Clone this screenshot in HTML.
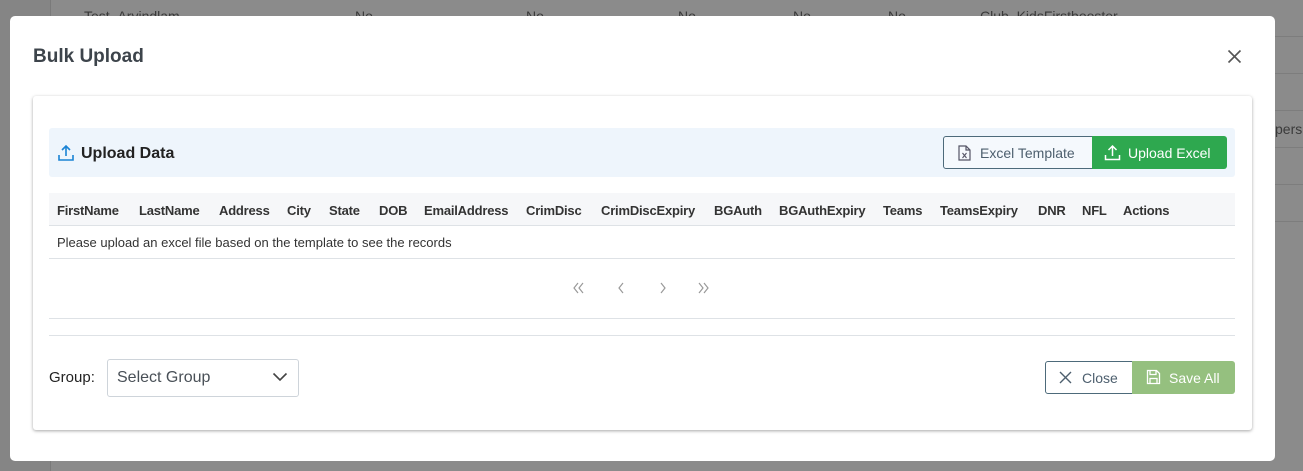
<!DOCTYPE html>
<html><head><meta charset="utf-8"><style>
*{box-sizing:border-box;margin:0;padding:0}
body{width:1303px;height:471px;overflow:hidden;background:#8b8b8b;font-family:"Liberation Sans",sans-serif;position:relative}
.a{position:absolute}
.bgt{color:#3a3a3a;font-size:14px}
.h{font-size:13px;font-weight:bold;color:#333;top:203px;letter-spacing:-0.2px}
svg{position:absolute}
</style></head><body>
<div class="a" style="left:0;top:0;width:50px;height:471px;background:#858585"></div>
<div class="a" style="left:50px;top:0;width:1px;height:471px;background:#7a7a7a"></div>
<div class="a bgt" style="left:84px;top:8px">Test_Arvindlam</div>
<div class="a bgt" style="left:355px;top:8px">No</div>
<div class="a bgt" style="left:526px;top:8px">No</div>
<div class="a bgt" style="left:678px;top:8px">No</div>
<div class="a bgt" style="left:793px;top:8px">No</div>
<div class="a bgt" style="left:888px;top:8px">No</div>
<div class="a bgt" style="left:980px;top:8px">Club_KidsFirstbooster</div>
<div class="a bgt" style="left:1275px;top:121px">pers</div>
<div class="a" style="left:1275px;top:36px;width:28px;height:1px;background:#7d7d7d"></div>
<div class="a" style="left:1275px;top:73px;width:28px;height:1px;background:#7d7d7d"></div>
<div class="a" style="left:1275px;top:110px;width:28px;height:1px;background:#7d7d7d"></div>
<div class="a" style="left:1275px;top:147px;width:28px;height:1px;background:#7d7d7d"></div>
<div class="a" style="left:1275px;top:184px;width:28px;height:1px;background:#7d7d7d"></div>
<div class="a" style="left:1275px;top:221px;width:28px;height:1px;background:#7d7d7d"></div>

<div class="a" style="left:10px;top:16px;width:1265px;height:445px;background:#fff;border-radius:5px"></div>
<div class="a" style="left:33px;top:46px;font-size:19px;font-weight:bold;color:#3d444b">Bulk Upload</div>
<svg style="left:1227px;top:49px" width="15" height="15" viewBox="0 0 15 15"><path d="M1.5 1.5L13.5 13.5M13.5 1.5L1.5 13.5" stroke="#555" stroke-width="1.6"/></svg>

<div class="a" style="left:33px;top:96px;width:1219px;height:334px;background:#fff;box-shadow:0 1px 3px rgba(0,0,0,.35);border-radius:3px"></div>
<div class="a" style="left:49px;top:128px;width:1186px;height:49px;background:#eef5fc;border-radius:3px"></div>
<svg style="left:57px;top:144px" width="18" height="18" viewBox="0 0 18 18"><path d="M9 12V2M5 6l4-4 4 4M2 11v5h14v-5" fill="none" stroke="#1a83d4" stroke-width="1.6"/></svg>
<div class="a" style="left:81px;top:145px;font-size:16px;font-weight:bold;color:#222">Upload Data</div>
<div class="a" style="left:943px;top:136px;width:150px;height:33px;border:1px solid #4d6a7a;border-radius:3px 0 0 3px;background:#f5f9fd"></div>
<svg style="left:958px;top:145px" width="13" height="16" viewBox="0 0 13 16"><path d="M1 1h7l4 4v10H1z M8 1v4h4" fill="none" stroke="#556" stroke-width="1.2"/><path d="M4.5 8l4 5M8.5 8l-4 5" stroke="#556" stroke-width="1.1"/></svg>
<div class="a" style="left:980px;top:145px;font-size:14px;color:#4d5f6e">Excel Template</div>
<div class="a" style="left:1092px;top:136px;width:135px;height:33px;background:#2ea84f;border-radius:0 3px 3px 0"></div>
<svg style="left:1104px;top:144px" width="17" height="17" viewBox="0 0 17 17"><path d="M8.5 12V2M4.5 6l4-4 4 4M1.5 11v4.5h14V11" fill="none" stroke="#fff" stroke-width="1.5"/></svg>
<div class="a" style="left:1128px;top:145px;font-size:14px;color:#fff">Upload Excel</div>

<div class="a" style="left:49px;top:193px;width:1186px;height:33px;background:#f6f7f9;border-bottom:1px solid #dee2e6"></div>
<div class="a h" style="left:57px">FirstName</div>
<div class="a h" style="left:139px">LastName</div>
<div class="a h" style="left:219px">Address</div>
<div class="a h" style="left:287px">City</div>
<div class="a h" style="left:329px">State</div>
<div class="a h" style="left:379px">DOB</div>
<div class="a h" style="left:424px">EmailAddress</div>
<div class="a h" style="left:526px">CrimDisc</div>
<div class="a h" style="left:601px">CrimDiscExpiry</div>
<div class="a h" style="left:714px">BGAuth</div>
<div class="a h" style="left:779px">BGAuthExpiry</div>
<div class="a h" style="left:883px">Teams</div>
<div class="a h" style="left:940px">TeamsExpiry</div>
<div class="a h" style="left:1038px">DNR</div>
<div class="a h" style="left:1082px">NFL</div>
<div class="a h" style="left:1123px">Actions</div>
<div class="a" style="left:57px;top:235px;font-size:13px;color:#333">Please upload an excel file based on the template to see the records</div>
<div class="a" style="left:49px;top:258px;width:1186px;height:1px;background:#dee2e6"></div>
<svg style="left:570px;top:281px" width="150" height="14" viewBox="0 0 150 14" fill="none" stroke="#999" stroke-width="1.2">
<path d="M8 2L4 7l4 5M13 2L9 7l4 5"/>
<path d="M53 2L49 7l4 5"/>
<path d="M91 2l4 5-4 5"/>
<path d="M129 2l4 5-4 5M134 2l4 5-4 5"/>
</svg>
<div class="a" style="left:49px;top:318px;width:1186px;height:1px;background:#dee2e6"></div>
<div class="a" style="left:49px;top:335px;width:1186px;height:1px;background:#dee2e6"></div>

<div class="a" style="left:49px;top:369px;font-size:15px;color:#222">Group:</div>
<div class="a" style="left:107px;top:359px;width:192px;height:38px;border:1px solid #ced4da;border-radius:3px"></div>
<div class="a" style="left:117px;top:369px;font-size:16px;color:#495057">Select Group</div>
<svg style="left:272px;top:372px" width="16" height="10" viewBox="0 0 16 10"><path d="M1.5 1.5l6.5 6.5 6.5-6.5" fill="none" stroke="#444" stroke-width="1.6"/></svg>
<div class="a" style="left:1045px;top:361px;width:88px;height:33px;border:1px solid #4d6a7a;border-radius:3px 0 0 3px"></div>
<svg style="left:1059px;top:371px" width="13" height="13" viewBox="0 0 13 13"><path d="M1 1l11 11M12 1L1 12" stroke="#4d5f6e" stroke-width="1.4"/></svg>
<div class="a" style="left:1082px;top:370px;font-size:14px;color:#4d5f6e">Close</div>
<div class="a" style="left:1132px;top:361px;width:103px;height:33px;background:#95c07f;border-radius:0 3px 3px 0"></div>
<svg style="left:1146px;top:369px" width="15" height="16" viewBox="0 0 15 16"><path d="M1.5 1.5h9l3 3v10h-12z M4 1.5v4h6v-4 M4 14.5v-5h7v5" fill="none" stroke="#fff" stroke-width="1.3"/></svg>
<div class="a" style="left:1169px;top:370px;font-size:14px;color:#fff">Save All</div>
</body></html>
